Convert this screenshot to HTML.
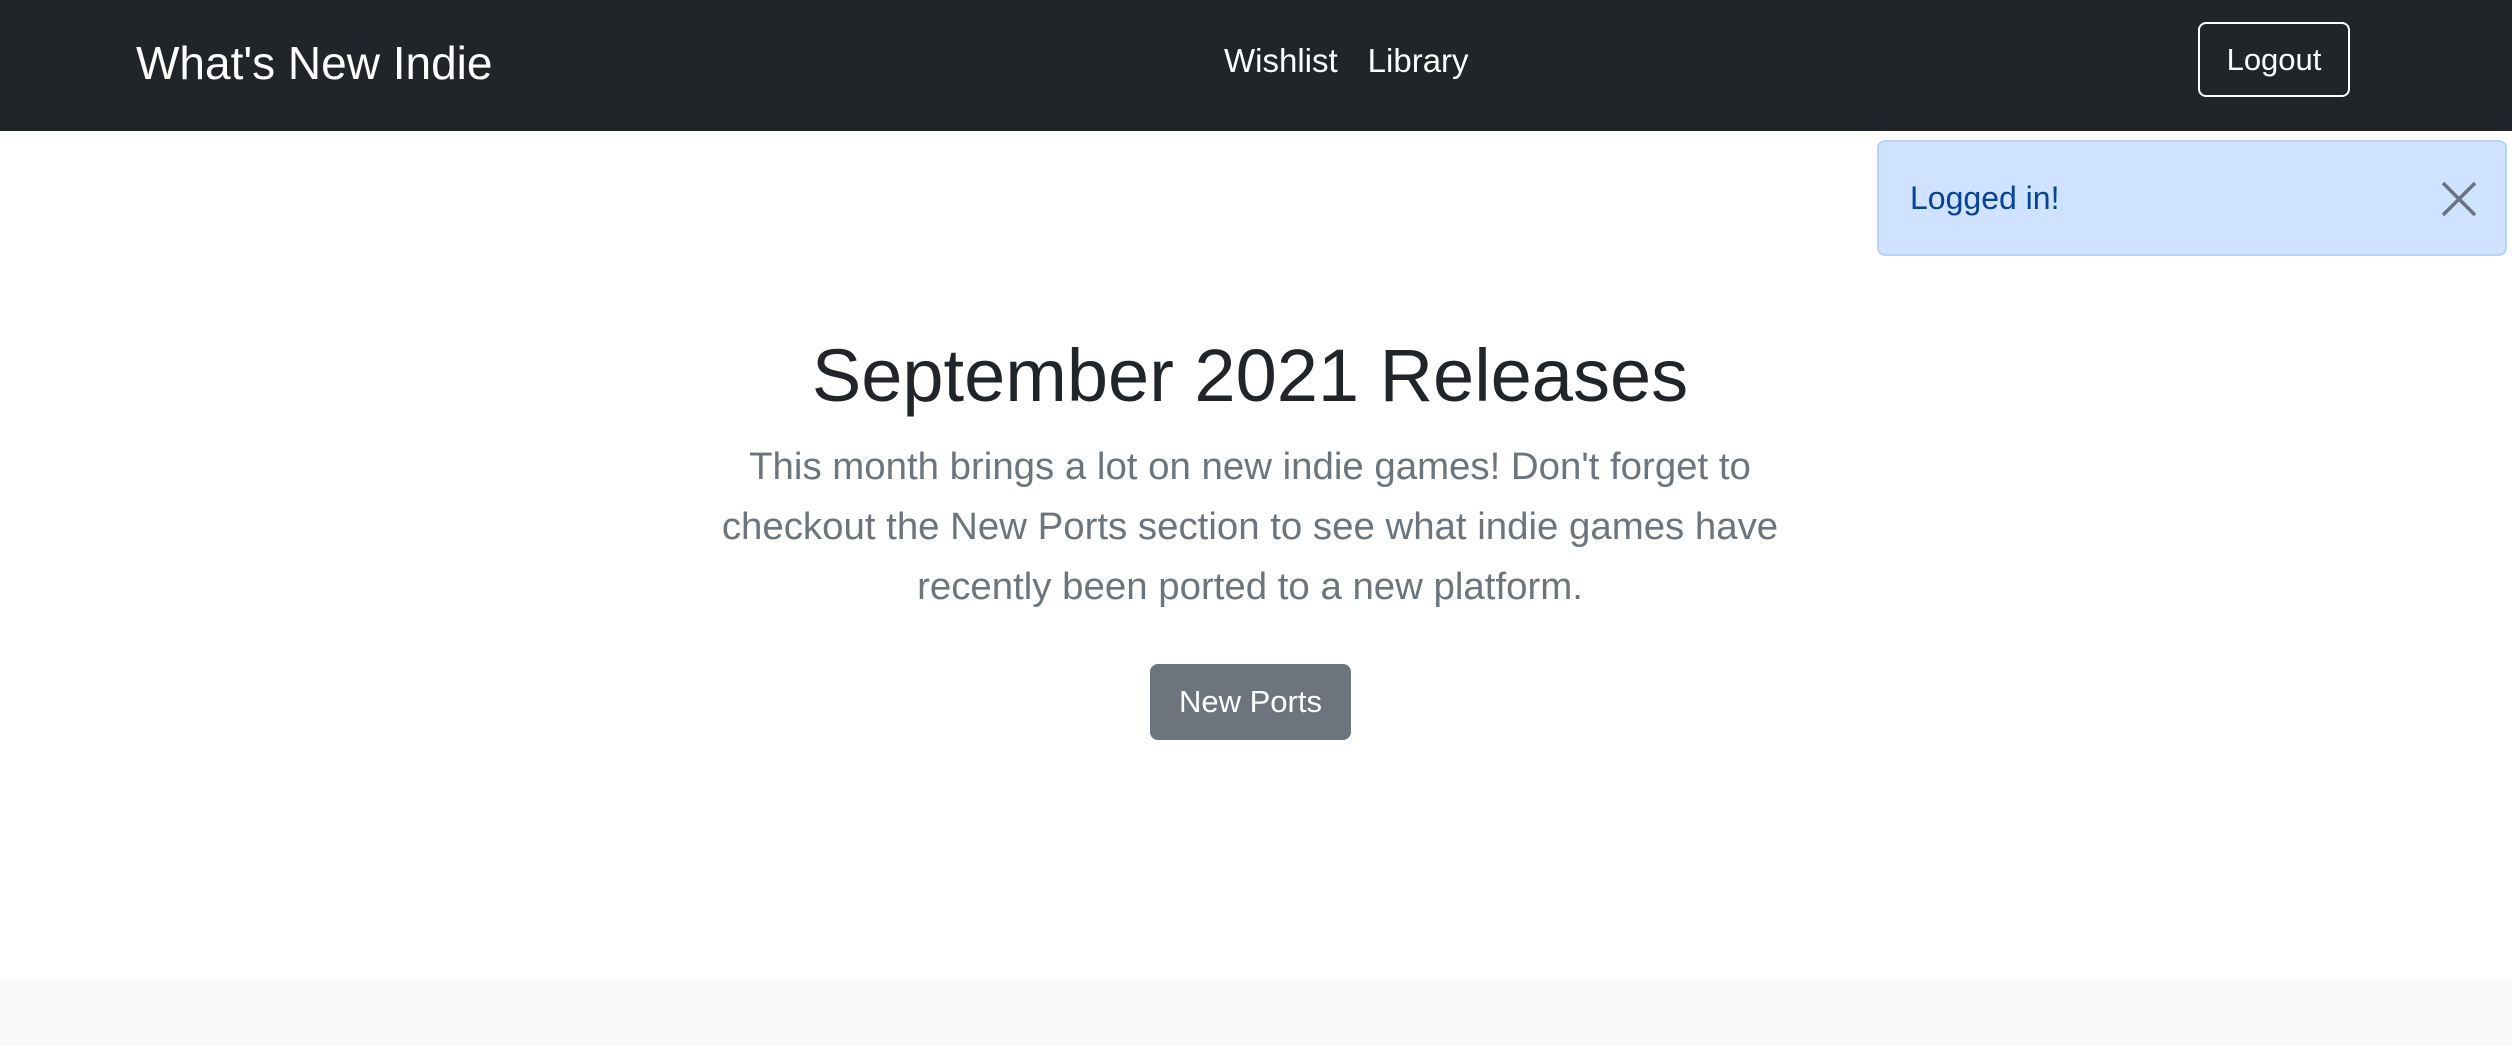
<!DOCTYPE html>
<html><head><meta charset="utf-8"><style>
*{margin:0;padding:0;box-sizing:border-box}
body{width:2512px;height:1046px;overflow:hidden;background:#fff;font-family:"Liberation Sans",Arial,sans-serif;position:relative}
nav{position:absolute;left:0;top:0;width:2512px;height:131px;background:#212529;color:#fff}
.brand{position:absolute;left:136px;top:35px;font-size:46px;line-height:56px}
.links{position:absolute;left:1224px;top:42px;font-size:33px;line-height:38px}
.links span{margin-right:30px}
.logout{position:absolute;left:2198px;top:22px;width:152px;height:75px;border:2px solid #fff;border-radius:8px;font-size:31px;line-height:71px;text-align:center}
.alert{position:absolute;left:1877px;top:140px;width:630px;height:116px;background:#cfe2ff;border:2px solid #b6d4fe;border-radius:8px;color:#084298;font-size:32px}
.alert .t{position:absolute;left:31px;top:38px;line-height:36px}
.alert svg{position:absolute;left:561px;top:38px}
h1{position:absolute;left:0;width:2500px;top:330px;text-align:center;font-weight:300;font-size:74px;line-height:92px;color:#212529}
p{position:absolute;left:715px;width:1070px;top:437px;text-align:center;font-size:38.4px;line-height:60px;color:#6c757d}
.btn{position:absolute;left:1150px;top:664px;width:201px;height:76px;background:#6c757d;border-radius:8px;color:#fff;font-size:31px;line-height:76px;text-align:center}
footer{position:absolute;left:0;top:979px;width:2512px;height:67px;background:#f8f9fa}
</style></head><body>
<nav><div class="brand">What's New Indie</div>
<div class="links"><span>Wishlist</span><span>Library</span></div>
<div class="logout">Logout</div></nav>
<div class="alert"><div class="t">Logged in!</div>
<svg width="38" height="38" viewBox="0 0 38 38"><path d="M3 3L35 35M35 3L3 35" stroke="#6b7280" stroke-width="3.5"/></svg></div>
<h1>September 2021 Releases</h1>
<p>This month brings a lot on new indie games! Don't forget to checkout the New Ports section to see what indie games have recently been ported to a new platform.</p>
<div class="btn">New Ports</div>
<footer></footer>
</body></html>
